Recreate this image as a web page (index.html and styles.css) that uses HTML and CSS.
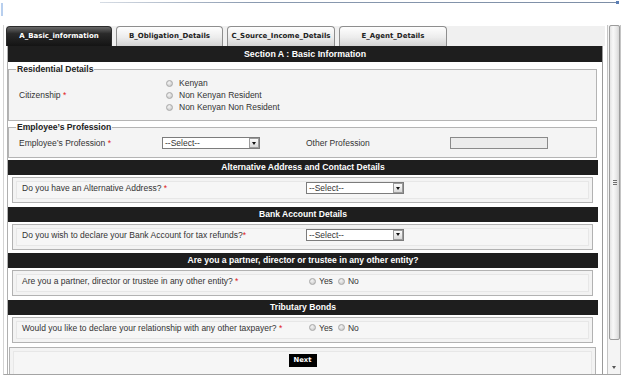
FILE: index.html
```html
<!DOCTYPE html>
<html>
<head>
<meta charset="utf-8">
<link rel="stylesheet" href="styles.css">
</head>
<body>
<div class="topbar">
  <span class="left-mark"></span>
  <span class="topline"></span>
  <span class="topline-end"></span>
</div>
<div class="frame">
  <div class="main">
    <div class="tabs">
      <div class="tab tab-active tab-a">A_Basic_information</div>
      <div class="tab tab-b">B_Obligation_Details</div>
      <div class="tab tab-c">C_Source_Income_Details</div>
      <div class="tab tab-e">E_Agent_Details</div>
    </div>
    <div class="panel">
      <div class="sec-head">Section A : Basic Information</div>

      <fieldset class="fs fs-res">
        <legend>Residential Details</legend>
        <div class="res-row">
          <div class="res-label">Citizenship <span class="req">*</span></div>
          <div class="radio-list">
            <div class="radio-line"><span class="radio"></span><span>Kenyan</span></div>
            <div class="radio-line"><span class="radio"></span><span>Non Kenyan Resident</span></div>
            <div class="radio-line"><span class="radio"></span><span>Non Kenyan Non Resident</span></div>
          </div>
        </div>
      </fieldset>

      <fieldset class="fs fs-prof">
        <legend>Employee’s Profession</legend>
        <div class="prof-row">
          <div class="prof-label">Employee’s Profession <span class="req">*</span></div>
          <div class="select"><span class="sel-text">--Select--</span><span class="sel-btn"><span class="tri"></span></span></div>
          <div class="other-label">Other Profession</div>
          <div class="text-input"></div>
        </div>
      </fieldset>

      <div class="sub-head">Alternative Address and Contact Details</div>
      <div class="box">
        <div class="box-row">
          <div class="q-label">Do you have an Alternative Address? <span class="req">*</span></div>
          <div class="select"><span class="sel-text">--Select--</span><span class="sel-btn"><span class="tri"></span></span></div>
        </div>
      </div>

      <div class="sub-head">Bank Account Details</div>
      <div class="box">
        <div class="box-row">
          <div class="q-label">Do you wish to declare your Bank Account for tax refunds?<span class="req">*</span></div>
          <div class="select"><span class="sel-text">--Select--</span><span class="sel-btn"><span class="tri"></span></span></div>
        </div>
      </div>

      <div class="sub-head">Are you a partner, director or trustee in any other entity?</div>
      <div class="box">
        <div class="box-row">
          <div class="q-label q-radio">Are you a partner, director or trustee in any other entity? <span class="req">*</span></div>
          <span class="radio"></span><span class="yn">Yes</span>
          <span class="radio"></span><span class="yn">No</span>
        </div>
      </div>

      <div class="sub-head">Tributary Bonds</div>
      <div class="box">
        <div class="box-row">
          <div class="q-label q-radio">Would you like to declare your relationship with any other taxpayer? <span class="req">*</span></div>
          <span class="radio"></span><span class="yn">Yes</span>
          <span class="radio"></span><span class="yn">No</span>
        </div>
      </div>

      <div class="box next-box">
        <button class="btn-next" type="button">Next</button>
      </div>
    </div>
  </div>
  <div class="scroll">
    <div class="thumb"><span class="grip"></span></div>
    <div class="track"></div>
    <div class="down"><span class="down-tri"></span></div>
  </div>
</div>
</body>
</html>
```

FILE: styles.css
```css
* { box-sizing: border-box; }
html, body { margin: 0; padding: 0; background: #fff; }
body {
  font-family: "Liberation Sans", Arial, sans-serif;
  font-size: 8.5px;
  color: #333;
  width: 628px;
  height: 381px;
  overflow: hidden;
}

/* top strip */
.topbar { display: flex; align-items: flex-start; height: 25px; }
.left-mark { width: 2px; height: 13px; margin: 3px 0 0 1px; background: #b8cfee; }
.topline { width: 516px; height: 1px; margin: 2px 0 0 97px; background: linear-gradient(90deg, #d6dce4, #8a9ab0 30%, #7d8ea6); }
.topline-end { width: 3px; height: 3px; margin: 1px 0 0 0; background: #5b7fb5; }

/* frame */
.frame {
  display: flex;
  margin-left: 3px;
  width: 618px;
  height: 350px;
  border-left: 1px solid #d4d4d4;
  border-bottom: 1px solid #a4a4a4;
}
.main { width: 603px; height: 349px; overflow: hidden; }

/* tabs */
.tabs {
  display: flex;
  gap: 4px;
  height: 20px;
  margin: 1px 0 0 0;
  padding-left: 2px;
  width: 601px;
  background: linear-gradient(90deg, #fff 0, #fff 2px, #f0f0f0 2px);
}
.tab {
  height: 20px;
  border: 1px solid #8e8e8e;
  border-bottom: none;
  border-radius: 4px 4px 0 0;
  background: linear-gradient(#fefefe, #ececec 55%, #d2d2d2);
  font-family: "DejaVu Sans", Verdana, sans-serif;
  font-weight: bold;
  font-size: 7px;
  color: #222;
  text-align: center;
  line-height: 19px;
  white-space: nowrap;
}
.tab-a { width: 106px; }
.tab-b { width: 107px; }
.tab-c { width: 108px; }
.tab-e { width: 108px; }
.tab-active {
  background: linear-gradient(#6a6a6a, #2a2a2a 35%, #141414);
  border-color: #2b2b2b;
  color: #fff;
}

/* panel */
.panel {
  margin-left: 3px;
  width: 596px;
  height: 340px;
  border-left: 1px solid #b0b0b0;
  border-right: 1px solid #9a9a9a;
}
.sec-head {
  height: 16px;
  background: #1e1e1e;
  color: #fff;
  font-weight: bold;
  font-size: 8.8px;
  line-height: 16px;
  text-align: center;
}

/* fieldsets */
.fs {
  margin: 2px 5px 0 0;
  padding: 0 6px 7px 7px;
  border: 1px solid #b4b4b4;
  background: #f4f4f4;
  min-width: 0;
}
.fs legend {
  padding: 0 1px;
  font-weight: bold;
  font-size: 8.6px;
  line-height: 10px;
  color: #222;
}
.fs-res { margin-top: 2px; }
.res-row { display: flex; align-items: center; padding: 3px 0 0 3px; }
.res-label { width: 147px; }
.radio-list { display: flex; flex-direction: column; }
.radio-line { display: flex; align-items: center; height: 12px; }
.radio-line .radio { margin-right: 6px; }

.fs-prof { margin-top: 1px; padding-bottom: 8px; }
.prof-row { display: flex; align-items: center; height: 12px; margin-top: 5px; padding-left: 3px; }
.prof-label { width: 143px; }
.other-label { width: 144px; margin-left: 46px; }
.text-input { width: 98px; height: 12px; border: 1px solid #8a8a8a; background: #ececec; }

.req { color: #e0201a; }

/* radios */
.radio {
  display: inline-block;
  width: 7px;
  height: 7px;
  border-radius: 50%;
  border: 1px solid #a8a8a8;
  background: radial-gradient(circle at 40% 35%, #f4f4f4, #d0d0d0 70%, #bdbdbd);
  flex: none;
}

/* select */
.select {
  display: flex;
  align-items: center;
  width: 98px;
  height: 12px;
  border: 1px solid #7c7c7c;
  background: #fff;
  flex: none;
}
.sel-text { flex: 1; padding-left: 2px; color: #333; line-height: 10px; }
.sel-btn {
  width: 10px;
  height: 10px;
  border: 1px solid #9c9c9c;
  background: linear-gradient(#fbfbfb, #d9d9d9);
  display: flex;
  align-items: center;
  justify-content: center;
}
.tri {
  width: 0; height: 0;
  border-left: 2.5px solid transparent;
  border-right: 2.5px solid transparent;
  border-top: 3px solid #111;
}

/* sub sections */
.sub-head {
  margin: 2px 4px 0 0;
  height: 15px;
  background: #1e1e1e;
  color: #fff;
  font-weight: bold;
  font-size: 8.6px;
  line-height: 15px;
  text-align: center;
}
.box {
  margin: 2px 9px 3.67px 4px;
  height: 26px;
  border: 1px solid #b2b2b2;
  background: #f3f3f3;
  box-shadow: inset 0 0 0 3px #f3f3f3, inset 0 0 0 4px #e7e7e7, inset 0 0 0 40px #f6f6f6;
  padding: 4px 0 0 9px;
}
.box-row { display: flex; align-items: center; height: 12px; }
.q-label { width: 284px; flex: none; }
.q-label.q-radio { width: 287px; }
.yn { margin: 0 5px 0 3px; }

.next-box {
  margin: 4px 6px 0 1px;
  height: 40px;
  padding: 6px 0 0 0;
  display: flex;
  justify-content: center;
  align-items: flex-start;
}
.btn-next {
  width: 28px;
  height: 13px;
  padding: 0;
  border: none;
  background: #000;
  color: #fff;
  font-family: "DejaVu Sans", Verdana, sans-serif;
  font-weight: bold;
  font-size: 6.8px;
  line-height: 13px;
}

/* scrollbar */
.scroll {
  width: 14px;
  height: 349px;
  display: flex;
  flex-direction: column;
  background: #f4f4f4;
  border-left: 1px solid #c4c4c4;
  border-right: 1px solid #c4c4c4;
}
.thumb {
  height: 315px;
  margin: 0 0 0 1px;
  border: 1px solid #9c9c9c;
  border-radius: 2px;
  background: linear-gradient(90deg, #e4e4e4, #f8f8f8 35%, #e9e9e9 70%, #d6d6d6);
  display: flex;
  align-items: center;
  justify-content: center;
}
.grip {
  width: 4px;
  height: 5px;
  background: repeating-linear-gradient(#6e6e6e 0, #6e6e6e 1px, transparent 1px, transparent 2px);
}
.track { flex: 1; }
.down { height: 14px; display: flex; align-items: center; justify-content: center; }
.down-tri {
  width: 0; height: 0;
  border-left: 2.5px solid transparent;
  border-right: 2.5px solid transparent;
  border-top: 3px solid #555;
}
```
